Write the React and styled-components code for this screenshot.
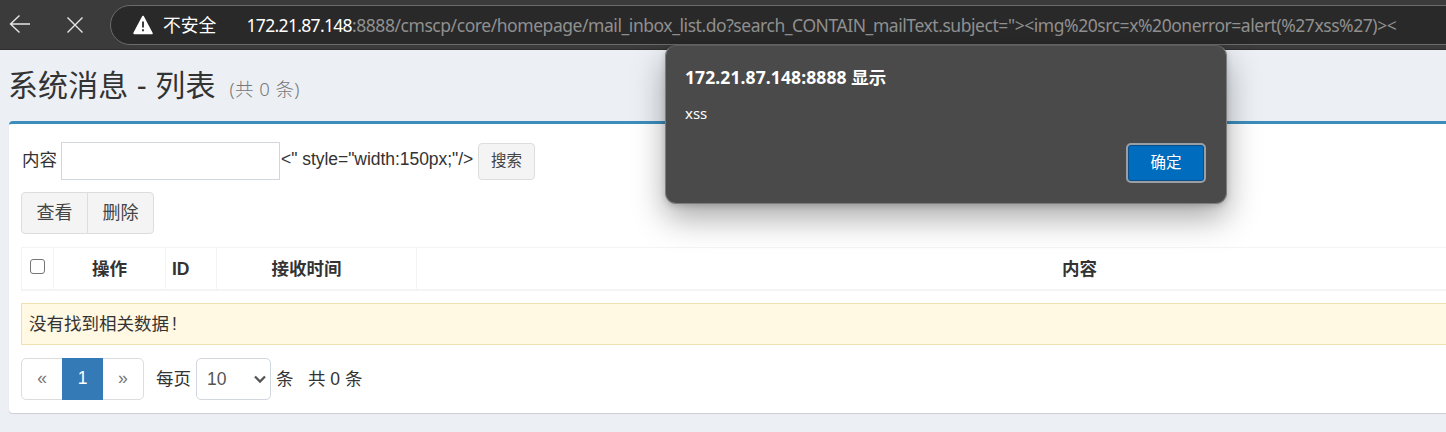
import React from "react";
import styled, { createGlobalStyle } from "styled-components";

const ui = `"Noto Sans", "Noto Sans CJK SC", sans-serif`;
const body = `"Liberation Sans", "Noto Sans CJK SC", sans-serif`;

const Global = createGlobalStyle`
  * { box-sizing: border-box; }
  html, body { margin: 0; overflow: hidden; }
  body { background: #ecf0f5; color: #333; font: 17.5px/24px ${body}; }
  button, input { font: inherit; margin: 0; }
`;

const Page = styled.div`
  position: relative;
  width: 100%;
  height: 432px;
  overflow: hidden;
`;

const Toolbar = styled.header`
  display: flex;
  align-items: flex-start;
  height: 50px;
  padding: 5px 0 0 9px;
  background: #3b3b3b;
  border-bottom: 1px solid #2e2e2e;
  overflow: hidden;
`;

const NavIcon = styled.svg`
  flex: none;
  width: 22px;
  height: 22px;
  margin: 8px ${(p) => p.$gap}px 0 0;
  fill: none;
  stroke: #e6e6e6;
  stroke-width: 1.4;
`;

const AddressBar = styled.div`
  flex: none;
  display: flex;
  align-items: center;
  width: 1400px;
  height: 40px;
  padding: 0 0 1px 22px;
  border: 1px solid #6b6b6b;
  border-radius: 20px;
  background: #292929;
  color: #909090;
  font: 17.5px/24px ${ui};
  white-space: nowrap;
`;

const WarningIcon = styled.svg`
  flex: none;
  width: 20px;
  height: 20px;
  margin-right: 10px;
`;

const Security = styled.span`
  width: 83.5px;
  color: #fff;
  font-size: 17.8px;
`;

const Host = styled.span`
  color: #fff;
  letter-spacing: -0.67px;
`;

const Path = styled.span`
  letter-spacing: -0.445px;
`;

const Heading = styled.h1`
  display: flex;
  align-items: baseline;
  height: 71px;
  margin: 0;
  padding: 14px 0 0 8px;
  font: 400 30px/44px ${body};
  letter-spacing: 0.1px;
  white-space: pre;
`;

const Count = styled.small`
  margin-left: 14px;
  color: #777;
  font: 300 18.5px/24px ${ui};
  letter-spacing: 0.4px;
`;

const Box = styled.main`
  width: 1746px;
  height: 292px;
  margin-left: 9px;
  padding: 18px 12px 0;
  border-top: 3px solid #3c8dbc;
  border-radius: 4px;
  background: #fff;
  box-shadow: 0 1px 1px rgba(0, 0, 0, 0.14);
`;

const SearchRow = styled.form`
  display: flex;
  align-items: center;
  height: 38px;
  white-space: pre;
`;

const Label = styled.label`
  width: 40px;
  padding: 0 0 3px 1px;
`;

const Field = styled.input`
  width: 219px;
  height: 38px;
  border: 1px solid #d2d6de;
  background: #fff;
  outline: none;
`;

const Residue = styled.span`
  width: 198px;
  padding: 0 0 4px 1px;
  letter-spacing: -0.04px;
`;

const Button = styled.button`
  height: ${(p) => (p.$small ? 37 : 42)}px;
  width: ${(p) => p.$width}px;
  padding: ${(p) => (p.$small ? "0" : "0 0 1px")};
  border: 1px solid #ddd;
  border-radius: ${(p) => p.$radius || "4px"};
  background: #f4f4f4;
  color: #444;
  font-size: ${(p) => (p.$small ? 15.5 : 18)}px;
`;

const ButtonGroup = styled.div`
  display: flex;
  margin-top: 12px;
  & > * + * { margin-left: -1px; }
`;

const Table = styled.table`
  width: 1722px;
  margin-top: 13px;
  table-layout: fixed;
  border-collapse: separate;
  border-spacing: 0;
  border: solid #f4f4f4;
  border-width: 1px 0 0 1px;
`;

const Th = styled.th`
  width: ${(p) => (p.$width ? `${p.$width}px` : "auto")};
  height: 43px;
  padding: 0 ${(p) => p.$endSpace || 6}px 0 6px;
  border: solid #f4f4f4;
  border-width: 0 1px 2px 0;
  text-align: ${(p) => p.$align || "center"};
  line-height: 24px;
`;

const Checkbox = styled.span`
  display: block;
  width: 15px;
  height: 15px;
  margin: -4px 0 0 2px;
  border: 1.5px solid #767676;
  border-radius: 3px;
  background: #fff;
`;

const Callout = styled.div`
  height: 42px;
  margin-top: 12px;
  padding: 8px 7px;
  border: 1px solid #f0e0b0;
  background: #fff8e3;
`;

const Mark = styled.span`
  margin-left: 3px;
`;

const Footer = styled.div`
  display: flex;
  align-items: center;
  height: 42px;
  margin-top: 13px;
  white-space: pre;
`;

const Pager = styled.div`
  display: flex;
  width: 123px;
  height: 42px;
  margin-right: 12px;
  border: 1px solid #ddd;
  border-radius: 5px;
`;

const PageLink = styled.a`
  flex: 1;
  margin: -1px 0;
  line-height: 40px;
  text-align: center;
  color: ${(p) => (p.$active ? "#fff" : "#777")};
  background: ${(p) => (p.$active ? "#337ab7" : "transparent")};
`;

const FooterText = styled.span`
  width: ${(p) => p.$width}px;
  padding-bottom: 1px;
`;

const PageSize = styled.div`
  display: flex;
  align-items: center;
  justify-content: space-between;
  width: 75px;
  height: 42px;
  margin-right: 5px;
  padding: 0 3px 0 10px;
  border: 1px solid #d2d6de;
  border-radius: 5px;
  color: #555;
`;

const Dialog = styled.section`
  position: absolute;
  left: 665px;
  top: 45px;
  width: 562px;
  height: 159px;
  display: flex;
  flex-direction: column;
  padding: 19px 20px 19px 19px;
  border: 1px solid #7d7d7d;
  border-top-color: #5c5c5c;
  border-radius: 11px;
  background: #4a4a4a;
  color: #fff;
  font-family: ${ui};
  box-shadow: 0 14px 32px rgba(0, 0, 0, 0.34), 0 2px 6px rgba(0, 0, 0, 0.16);
`;

const DialogTitle = styled.h2`
  margin: 0;
  font: 700 17.5px/24px ${ui};
  letter-spacing: 0.1px;
`;

const DialogText = styled.p`
  margin: 13px 0 0;
  font-size: 15px;
  line-height: 22px;
`;

const Confirm = styled.button`
  align-self: flex-end;
  width: 80px;
  height: 40px;
  margin-top: 19px;
  padding: 0 0 2px;
  border: 2px solid #9a9fa4;
  border-radius: 5px;
  background: #006cbe;
  box-shadow: inset 0 0 0 1px #0a4f8c;
  color: #fff;
  font: 15.5px/24px ${ui};
`;

export default function App() {
  return (
    <Page>
      <Global />
      <Toolbar>
        <NavIcon $gap={33} viewBox="0 0 22 22">
          <path d="M21 11H1.5M10.5 2.5L1.5 11l9 8.5" />
        </NavIcon>
        <NavIcon $gap={24} viewBox="0 0 22 22">
          <path d="M3.5 4.5l15 15M18.5 4.5l-15 15" />
        </NavIcon>
        <AddressBar>
          <WarningIcon viewBox="0 0 20 20">
            <path d="M10 1.7L18.7 18.3H1.3Z" fill="#fff" stroke="#fff" strokeWidth="2" strokeLinejoin="round" />
            <path d="M10 6.5v6M10 14.3v2" stroke="#292929" strokeWidth="1.8" />
          </WarningIcon>
          <Security>不安全</Security>
          <Host>172.21.87.148</Host>
          <Path>{`:8888/cmscp/core/homepage/mail_inbox_list.do?search_CONTAIN_mailText.subject="><img%20src=x%20onerror=alert(%27xss%27)><`}</Path>
        </AddressBar>
      </Toolbar>
      <Heading>
        系统消息 - 列表<Count>(共 0 条)</Count>
      </Heading>
      <Box>
        <SearchRow>
          <Label>内容</Label>
          <Field />
          <Residue>{`<" style="width:150px;"/>`}</Residue>
          <Button type="button" $small $width={57}>搜索</Button>
        </SearchRow>
        <ButtonGroup>
          <Button $width={67} $radius="4px 0 0 4px">查看</Button>
          <Button $width={67} $radius="0 4px 4px 0">删除</Button>
        </ButtonGroup>
        <Table>
          <thead>
            <tr>
              <Th $width={32}><Checkbox /></Th>
              <Th $width={112}>操作</Th>
              <Th $width={51} $align="left">ID</Th>
              <Th $width={200} $endSpace={26}>接收时间</Th>
              <Th>内容</Th>
            </tr>
          </thead>
        </Table>
        <Callout>没有找到相关数据<Mark>!</Mark></Callout>
        <Footer>
          <Pager>
            <PageLink>«</PageLink>
            <PageLink $active>1</PageLink>
            <PageLink>»</PageLink>
          </Pager>
          <FooterText $width={40}>每页</FooterText>
          <PageSize>
            10
            <svg width="14" height="10" viewBox="0 0 14 10" fill="none" stroke="#555" strokeWidth="2.3">
              <path d="M2 2.5l5 5 5-5" />
            </svg>
          </PageSize>
          <FooterText $width={32}>条</FooterText>
          <FooterText>共 0 条</FooterText>
        </Footer>
      </Box>
      <Dialog>
        <DialogTitle>172.21.87.148:8888 显示</DialogTitle>
        <DialogText>xss</DialogText>
        <Confirm>确定</Confirm>
      </Dialog>
    </Page>
  );
}
